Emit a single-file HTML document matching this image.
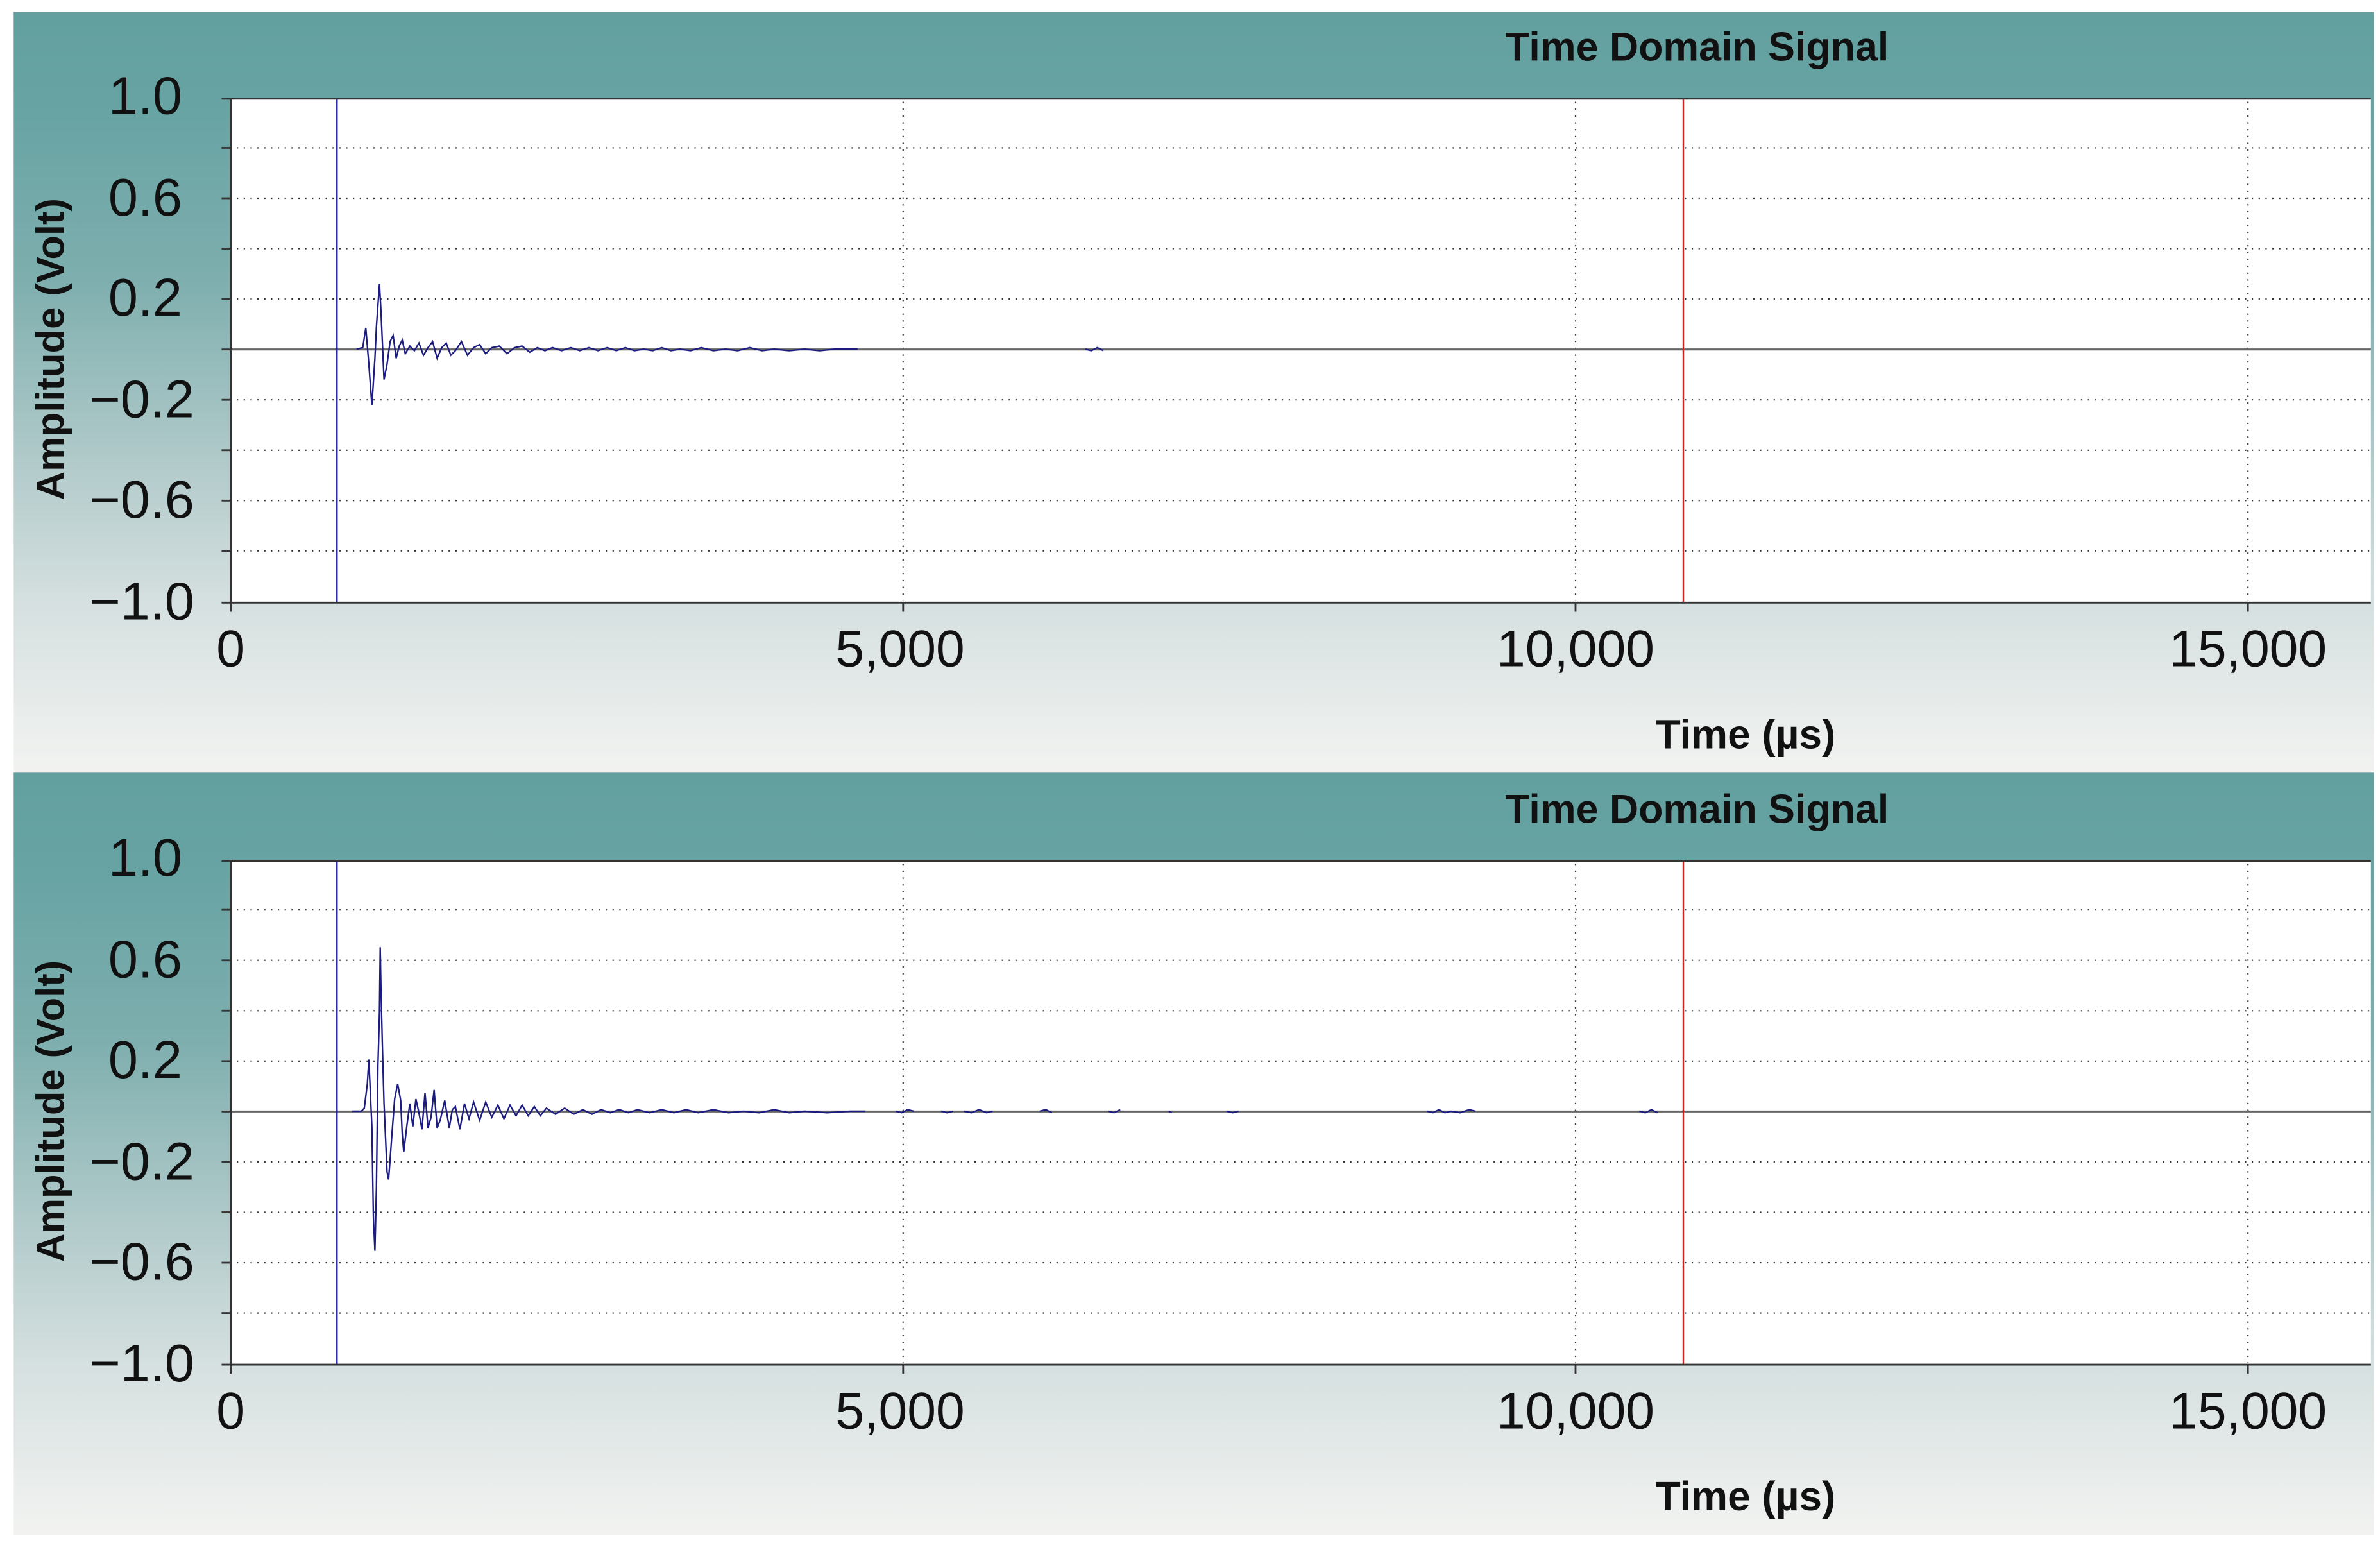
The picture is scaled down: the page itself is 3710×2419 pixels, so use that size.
<!DOCTYPE html>
<html><head><meta charset="utf-8"><style>
html,body{margin:0;padding:0;background:#fff;}
svg{display:block;}
text{font-family:"Liberation Sans",Arial,sans-serif;fill:#111;}
</style></head><body>
<svg width="3710" height="2419" viewBox="0 0 1568 1022.4" preserveAspectRatio="none" xmlns="http://www.w3.org/2000/svg">
<defs>
<linearGradient id="bg" x1="0" y1="0" x2="0" y2="1">
<stop offset="0" stop-color="#62a09f"/>
<stop offset="0.12" stop-color="#67a3a3"/>
<stop offset="0.35" stop-color="#7eaeae"/>
<stop offset="0.6" stop-color="#b3cbcb"/>
<stop offset="0.78" stop-color="#d6e0e0"/>
<stop offset="1" stop-color="#f2f3f1"/>
</linearGradient>
<g id="grid">
<rect x="152" y="65" width="1410" height="332" fill="#fff"/>
<g stroke="#333" stroke-width="0.9" stroke-dasharray="0.9 3.6">
<line x1="156" y1="97.4" x2="1562" y2="97.4"/>
<line x1="156" y1="130.6" x2="1562" y2="130.6"/>
<line x1="156" y1="163.8" x2="1562" y2="163.8"/>
<line x1="156" y1="197" x2="1562" y2="197"/>
<line x1="156" y1="263.4" x2="1562" y2="263.4"/>
<line x1="156" y1="296.6" x2="1562" y2="296.6"/>
<line x1="156" y1="329.8" x2="1562" y2="329.8"/>
<line x1="156" y1="363" x2="1562" y2="363"/>
<line x1="595" y1="67" x2="595" y2="396"/>
<line x1="1038" y1="67" x2="1038" y2="396"/>
<line x1="1481" y1="67" x2="1481" y2="396"/>
</g>
<line x1="152" y1="230.2" x2="1562" y2="230.2" stroke="#666" stroke-width="1.3"/>
<line x1="222" y1="65" x2="222" y2="397" stroke="#1a1aa8" stroke-width="1"/>
<line x1="1109" y1="65" x2="1109" y2="397" stroke="#d42020" stroke-width="1"/>
<g stroke="#333" stroke-width="1.2">
<line x1="146" y1="65" x2="1562" y2="65"/>
<line x1="146" y1="397" x2="1562" y2="397"/>
<line x1="152" y1="65" x2="152" y2="403"/>
<line x1="146" y1="97.4" x2="152" y2="97.4"/>
<line x1="146" y1="130.6" x2="152" y2="130.6"/>
<line x1="146" y1="163.8" x2="152" y2="163.8"/>
<line x1="146" y1="197" x2="152" y2="197"/>
<line x1="146" y1="230.2" x2="152" y2="230.2"/>
<line x1="146" y1="263.4" x2="152" y2="263.4"/>
<line x1="146" y1="296.6" x2="152" y2="296.6"/>
<line x1="146" y1="329.8" x2="152" y2="329.8"/>
<line x1="146" y1="363" x2="152" y2="363"/>
<line x1="595" y1="397" x2="595" y2="403"/>
<line x1="1038" y1="397" x2="1038" y2="403"/>
<line x1="1481" y1="397" x2="1481" y2="403"/>
</g>
</g>
</defs>

<!-- panel 1 -->
<rect x="9" y="8" width="1555" height="501" fill="url(#bg)"/>
<use href="#grid"/>
<path fill="none" stroke="#1c1c80" stroke-width="1" d="M235,230 L239,229 L241,216 L243,240 L245,267 L247,236 L248,215 L250,187 L251,205 L253,250 L255,240 L257,225 L259,221 L261,236 L263,228 L265,224 L267,233 L270,228 L273,231 L276,226 L279,234 L282,229 L285,225 L288,236 L291,229 L294,226 L297,234 L300,231 L304,225 L308,234 L312,229 L316,227 L320,233 L324,229 L329,228 L334,233 L339,229 L344,228 L349,232 L354,229 L359,231 L364,229 L370,231 L376,229 L382,231 L388,229 L394,231 L400,229 L406,231 L412,229 L418,231 L424,230 L430,231 L436,229 L442,231 L448,230 L455,231 L462,229 L470,231 L478,230 L486,231 L494,229 L502,231 L510,230 L520,231 L530,230 L540,231 L550,230 L565,230"/>
<path fill="none" stroke="#1c1c80" stroke-width="1" d="M715,230 L719,231 L723,229 L727,231"/>
<text x="1118" y="40" font-size="26.5" font-weight="bold" text-anchor="middle">Time Domain Signal</text>
<g font-size="35" text-anchor="end">
<text x="120" y="75">1.0</text>
<text x="120" y="142">0.6</text>
<text x="120" y="208">0.2</text>
<text x="128" y="275">−0.2</text>
<text x="128" y="341">−0.6</text>
<text x="128" y="408">−1.0</text>
</g>
<g font-size="34" text-anchor="middle">
<text x="152" y="439">0</text>
<text x="593" y="439">5,000</text>
<text x="1038" y="439">10,000</text>
<text x="1481" y="439">15,000</text>
</g>
<text x="1150" y="493" font-size="27" font-weight="bold" text-anchor="middle">Time (µs)</text>
<text transform="translate(42,230) rotate(-90)" font-size="26" font-weight="bold" text-anchor="middle">Amplitude (Volt)</text>

<!-- panel 2 -->
<rect x="9" y="509" width="1555" height="502" fill="url(#bg)"/>
<g transform="translate(0,502)">
<use href="#grid"/>
<path fill="none" stroke="#1c1c80" stroke-width="1" d="M232,230 L238,230 L240,228 L242,212 L243,196 L245,240 L246,300 L247,322 L248,280 L249,200 L250,165 L250.5,122 L251,150 L252,190 L253,225 L255,270 L256,275 L257,262 L258,248 L260,222 L262,212 L264,223 L265,245 L266,257 L268,240 L270,225 L272,240 L274,222 L276,231 L278,242 L280,218 L282,241 L284,234 L286,216 L288,241 L290,236 L293,223 L296,241 L298,229 L300,227 L303,242 L306,225 L309,235 L312,224 L316,236 L320,224 L324,234 L328,226 L332,235 L336,226 L340,233 L344,226 L348,233 L352,227 L356,233 L360,228 L366,232 L372,228 L378,232 L384,229 L390,232 L396,229 L402,231 L408,229 L414,231 L420,229 L428,231 L436,229 L444,231 L452,229 L460,231 L470,229 L480,231 L490,230 L500,231 L510,229 L520,231 L530,230 L545,231 L560,230 L570,230"/>
<path fill="none" stroke="#1c1c80" stroke-width="1" d="M590,230 L594,231 L598,229 L602,230 M620,230 L624,231 L628,230 M635,230 L640,231 L645,229 L650,231 L654,230 M685,230 L689,229 L693,231 M730,230 L734,231 L738,229 M770,230 L772,231 M808,230 L812,231 L816,230 M940,230 L944,231 L948,229 L952,231 L956,230 L962,231 L968,229 L972,230 M1080,230 L1084,231 L1088,229 L1092,231"/>
</g>
<text x="1118" y="542" font-size="26.5" font-weight="bold" text-anchor="middle">Time Domain Signal</text>
<g font-size="35" text-anchor="end">
<text x="120" y="577">1.0</text>
<text x="120" y="644">0.6</text>
<text x="120" y="710">0.2</text>
<text x="128" y="777">−0.2</text>
<text x="128" y="843">−0.6</text>
<text x="128" y="910">−1.0</text>
</g>
<g font-size="34" text-anchor="middle">
<text x="152" y="941">0</text>
<text x="593" y="941">5,000</text>
<text x="1038" y="941">10,000</text>
<text x="1481" y="941">15,000</text>
</g>
<text x="1150" y="995" font-size="27" font-weight="bold" text-anchor="middle">Time (µs)</text>
<text transform="translate(42,732) rotate(-90)" font-size="26" font-weight="bold" text-anchor="middle">Amplitude (Volt)</text>
</svg>
</body></html>
